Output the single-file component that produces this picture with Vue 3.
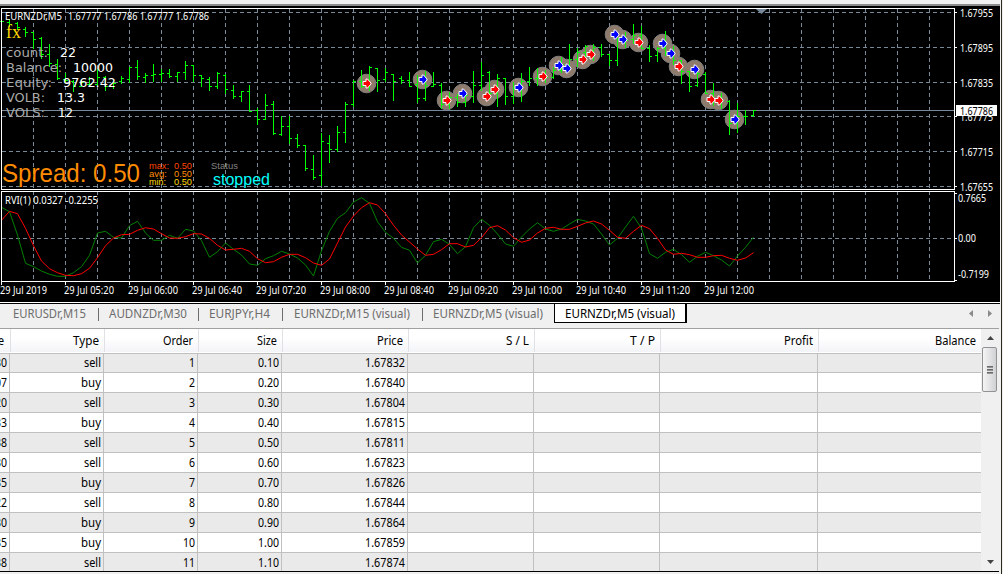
<template>
  <div class="terminal">
    <div class="chart-area">
      <svg class="chart" width="1000" height="296" viewBox="0 6 1000 296">
        <rect x="0" y="6" width="1000" height="296" fill="#000" />

        <!-- grid -->
        <g class="grid">
          <line v-for="x in gridX" :key="'v' + x" :x1="x + 0.5" :x2="x + 0.5" y1="9" y2="281" />
          <line v-for="y in gridY" :key="'h' + y" x1="2" x2="954" :y1="y + 0.5" :y2="y + 0.5" />
        </g>
        <path d="M756 9h11l-5.500 5z" fill="#778899" />
        <rect x="2" y="110" width="952" height="1" fill="#778899" />

        <!-- trade markers -->
        <g v-for="(m, i) in markers" :key="'m' + i" :transform="`translate(${m[0]} ${m[1]})`">
          <circle cx="0.5" cy="0.500" r="9.300" fill="#8f7b6c" stroke="#82807f" />
        </g>
        <path :d="barPath" class="bars" />
        <g v-for="(m, i) in markers" :key="'a' + i" :transform="`translate(${m[0] + 0.5} ${m[1]})`">
          <path
            d="M-3.500 -1.500h3v-2.500h1.500l3.500 4v1l-3.500 4h-1.500v-2.500h-3z"
            :fill="m[2] === 'b' ? '#0000ff' : '#ff0000'"
            stroke="#fff"
          />
        </g>

        <!-- RVI indicator -->
        <polyline :points="linePoints(rviMain)" class="rvi" stroke="#008000" />
        <polyline :points="linePoints(rviSignal)" class="rvi" stroke="#ff0000" />

        <!-- frames -->
        <rect x="0" y="190" width="956" height="1" fill="#000" />
        <g class="frame">
          <rect x="1.500" y="8.500" width="953" height="181" />
          <rect x="1.500" y="191.500" width="953" height="90" />
          <path v-for="y in gridY" :key="'t' + y" :d="`M955 ${y + 0.5}h2`" />
          <path v-for="(t, i) in times" :key="'n' + i" :d="`M${1.5 + i * 64} 282v3`" />
          <path d="M955 193.500h2M955 280.500h2" />
        </g>

        <!-- scales -->
        <g class="scale">
          <text
            v-for="p in prices"
            :key="p[0]"
            x="960"
            :y="p[1]"
            textLength="33"
            lengthAdjust="spacingAndGlyphs"
          >{{ p[0] }}</text>
          <rect x="956" y="105" width="41" height="11" fill="#fff" />
          <text x="960" y="114.500" class="current" textLength="33" lengthAdjust="spacingAndGlyphs">1.67786</text>
          <text x="958" y="202" textLength="28" lengthAdjust="spacingAndGlyphs">0.7665</text>
          <text x="958" y="242" textLength="18" lengthAdjust="spacingAndGlyphs">0.00</text>
          <text x="958" y="278" textLength="31" lengthAdjust="spacingAndGlyphs">-0.7199</text>
          <text
            v-for="(t, i) in times"
            :key="t"
            :x="i * 64"
            y="294"
            :textLength="i ? 50 : 47"
            lengthAdjust="spacingAndGlyphs"
          >{{ t }}</text>
          <text x="5" y="20" textLength="57" lengthAdjust="spacingAndGlyphs">EURNZDr,M5</text>
          <text x="68" y="20" textLength="141" lengthAdjust="spacingAndGlyphs">1.67777 1.67786 1.67777 1.67786</text>
          <text x="5" y="204" textLength="93" lengthAdjust="spacingAndGlyphs">RVI(1) 0.0327 -0.2255</text>
        </g>

        <!-- advisor panel -->
        <text x="6" y="38" class="fx" textLength="15" lengthAdjust="spacingAndGlyphs">fx</text>
        <g v-for="s in stats" :key="s.label" class="stat">
          <text x="6" :y="s.y" fill="#a9a9a9" :textLength="s.lw" lengthAdjust="spacingAndGlyphs">{{ s.label }}</text>
          <text :x="s.x" :y="s.y" fill="#fff" :textLength="s.vw" lengthAdjust="spacingAndGlyphs">{{ s.value }}</text>
        </g>
        <text x="2" y="182" class="spread" textLength="138" lengthAdjust="spacingAndGlyphs">Spread: 0.50</text>
        <g v-for="s in spreads" :key="s.label" class="small" :fill="s.color">
          <text x="149" :y="s.y" :textLength="s.w" lengthAdjust="spacingAndGlyphs">{{ s.label }}</text>
          <text x="174" :y="s.y" textLength="18" lengthAdjust="spacingAndGlyphs">0.50</text>
        </g>
        <text x="211" y="169" class="small" fill="#808080" textLength="27" lengthAdjust="spacingAndGlyphs">Status</text>
        <text x="213" y="185" class="status" textLength="57" lengthAdjust="spacingAndGlyphs">stopped</text>
      </svg>
    </div>

    <div class="tabs">
      <div
        v-for="t in tabs"
        :key="t.id"
        class="tab"
        :class="{ active: t.active }"
        :style="{ width: t.width + 'px' }"
      >
        <svg :width="t.text" height="16">
          <text x="0" y="12" :textLength="t.text" lengthAdjust="spacingAndGlyphs">{{ t.name }}</text>
        </svg>
      </div>
      <svg class="arrows" width="26" height="9" viewBox="0 0 26 9" fill="#8a8a8a">
        <path d="M4 1v7L0 4.500z" />
        <path d="M19 1v7l4-3.500z" />
      </svg>
    </div>

    <div class="results">
      <div class="table">
        <div class="row head">
          <div v-for="(c, i) in columns" :key="i" class="cell" :style="{ width: c.hw + 'px' }">
            <svg :width="c.tw" height="16">
              <text :x="i ? 0 : -20" y="12" :textLength="i ? c.tw : 25" lengthAdjust="spacingAndGlyphs">{{ c.name }}</text>
            </svg>
          </div>
        </div>
        <div v-for="(r, n) in rows" :key="n" class="row" :class="{ odd: n % 2 === 0 }">
          <div v-for="(c, i) in columns" :key="i" class="cell" :style="{ width: c.w + 'px' }">
            <svg v-if="r[i]" :width="cellWidth(i, r[i])" height="16">
              <text x="0" y="12" :textLength="cellWidth(i, r[i])" lengthAdjust="spacingAndGlyphs">{{ r[i] }}</text>
            </svg>
          </div>
        </div>
      </div>
      <div class="scrollbar">
        <svg width="17" height="18" viewBox="0 0 17 18"><path d="M5 11l3.500-4 3.500 4z" fill="#444" /></svg>
        <div class="thumb"><i></i><i></i><i></i></div>
        <svg class="down" width="17" height="18" viewBox="0 0 17 18"><path d="M5 7l3.500 4 3.500-4z" fill="#444" /></svg>
      </div>
    </div>
  </div>
</template>

<script setup>
const gridX = Array.from({ length: 29 }, (_, i) => 33 + i * 32)
const gridY = [12, 47, 82, 116, 151, 186, 238]

const prices = [
  ['1.67955', 17],
  ['1.67895', 52],
  ['1.67835', 87],
  ['1.67775', 121],
  ['1.67715', 156],
  ['1.67655', 190.5]
]

const times = [
  '29 Jul 2019', '29 Jul 05:20', '29 Jul 06:00', '29 Jul 06:40', '29 Jul 07:20', '29 Jul 08:00',
  '29 Jul 08:40', '29 Jul 09:20', '29 Jul 10:00', '29 Jul 10:40', '29 Jul 11:20', '29 Jul 12:00'
]

// high, low, open, close for each bar, 8px apart
const bars = [
  [20, 22, 21, 21], [19, 26, 22, 24], [22, 29, 23, 27], [27, 36, 29, 32], [32, 48, 32, 39], [37, 58, 38, 54],
  [44, 66, 54, 63], [59, 79, 64, 78], [73, 82, 79, 80], [80, 91, 81, 86], [80, 86, 86, 82], [77, 86, 84, 84],
  [69, 85, 84, 77], [76, 90, 77, 86], [79, 88, 86, 83], [76, 83, 81, 78], [67, 82, 79, 67], [60, 79, 67, 76],
  [73, 82, 77, 75], [64, 81, 75, 74], [69, 81, 74, 73], [69, 77, 73, 76], [72, 81, 76, 72], [61, 79, 72, 65],
  [65, 81, 65, 75], [75, 86, 75, 78], [77, 90, 79, 86], [72, 88, 86, 73], [74, 93, 75, 89], [85, 98, 90, 96],
  [91, 101, 96, 91], [85, 111, 91, 111], [108, 124, 110, 119], [94, 119, 119, 105], [101, 134, 104, 133],
  [116, 135, 134, 126], [116, 143, 126, 138], [134, 147, 138, 145], [145, 170, 145, 168], [155, 179, 169, 177],
  [133, 185, 175, 141], [135, 162, 143, 149], [126, 151, 149, 132], [102, 142, 132, 104], [80, 106, 104, 81],
  [70, 87, 81, 86], [66, 90, 86, 67], [68, 91, 68, 80], [68, 81, 79, 72], [74, 100, 74, 81], [76, 83, 78, 80],
  [72, 86, 80, 86], [75, 102, 84, 98], [71, 100, 98, 85], [72, 86, 86, 84], [83, 108, 85, 104], [92, 108, 104, 97],
  [94, 106, 97, 102], [94, 106, 102, 95], [71, 102, 96, 85], [62, 90, 85, 75], [71, 98, 72, 93], [74, 106, 93, 78],
  [78, 104, 78, 96], [82, 103, 96, 88], [73, 101, 88, 81], [67, 85, 81, 78], [68, 85, 78, 78], [70, 82, 78, 77],
  [67, 78, 77, 70], [57, 72, 70, 64], [44, 68, 67, 59], [48, 66, 59, 52], [45, 56, 52, 46], [44, 60, 50, 47],
  [44, 56, 47, 54], [54, 65, 54, 60], [38, 65, 60, 38], [32, 47, 38, 40], [24, 43, 39, 35], [26, 48, 35, 48],
  [45, 61, 48, 56], [47, 61, 55, 48], [31, 55, 48, 52], [46, 64, 52, 60], [60, 83, 60, 71], [71, 91, 71, 86],
  [68, 86, 85, 73], [72, 93, 74, 93], [83, 105, 93, 98], [93, 108, 96, 100], [100, 134, 101, 123],
  [103, 132, 123, 116], [110, 124, 116, 116], [110, 116, 115, 110]
]

const barPath = bars
  .map(([h, l, o, c], i) => {
    const x = 1.5 + i * 8
    return `M${x} ${h}V${l + 1}M${x - 2.5} ${o + 0.5}h2M${x} ${c + 0.5}h2.5`
  })
  .join('')

const markers = [
  [366, 83, 'r'], [422, 79, 'b'], [446, 100, 'r'], [462, 93, 'b'], [486, 96, 'r'], [494, 89, 'r'],
  [518, 87, 'b'], [542, 76, 'r'], [558, 65, 'b'], [566, 68, 'b'], [582, 59, 'r'], [590, 54, 'r'],
  [614, 34, 'b'], [622, 39, 'b'], [638, 42, 'r'], [662, 43, 'b'], [670, 53, 'b'], [678, 66, 'r'],
  [694, 69, 'b'], [710, 99, 'r'], [718, 100, 'r'], [734, 119, 'b']
]

// indicator values in thirds of a pixel below the top of the pane
const rviMain = [
  67, 80, 150, 235, 245, 258, 268, 274, 274, 263, 245, 211, 144, 139, 157, 159, 122, 109, 144, 166, 166, 151,
  160, 133, 138, 167, 217, 200, 174, 193, 210, 237, 241, 221, 212, 199, 207, 219, 240, 273, 197, 139, 100, 83,
  51, 38, 55, 110, 142, 160, 187, 196, 234, 211, 170, 163, 178, 206, 185, 128, 103, 121, 147, 177, 184, 156,
  132, 113, 132, 139, 132, 117, 103, 108, 117, 147, 180, 160, 126, 94, 130, 206, 220, 202, 193, 209, 232, 214,
  202, 212, 225, 243, 213, 187, 157
]
const rviSignal = [
  106, 79, 86, 130, 182, 228, 251, 263, 271, 272, 266, 250, 218, 182, 159, 149, 148, 136, 128, 132, 146, 159,
  160, 155, 146, 147, 160, 181, 195, 193, 190, 199, 221, 233, 230, 217, 208, 208, 218, 234, 241, 222, 174, 126,
  93, 68, 53, 60, 86, 121, 150, 171, 192, 211, 208, 194, 176, 176, 186, 181, 158, 128, 122, 135, 158, 172,
  165, 144, 130, 127, 133, 133, 124, 114, 108, 117, 136, 157, 160, 139, 121, 131, 160, 195, 208, 205, 209, 217,
  217, 212, 211, 220, 226, 219, 203
]

const linePoints = (values) => values.map((v, i) => `${1.5 + i * 8},${(185 + v / 3).toFixed(1)}`).join(' ')

const stats = [
  { label: 'count:', lw: 42, value: '22', x: 60, vw: 16, y: 57 },
  { label: 'Balance:', lw: 56, value: '10000', x: 73, vw: 40, y: 72 },
  { label: 'Equity:', lw: 46, value: '9762.42', x: 63, vw: 53, y: 87 },
  { label: 'VOLB:', lw: 39, value: '13.3', x: 57, vw: 28, y: 102 },
  { label: 'VOLS:', lw: 39, value: '12', x: 58, vw: 15, y: 117 }
]

const spreads = [
  { label: 'max:', w: 20, y: 169, color: '#ff4500' },
  { label: 'avg:', w: 18, y: 177, color: '#ff8c00' },
  { label: 'min:', w: 17, y: 185, color: '#ffd700' }
]

const tabs = [
  { id: 1, name: 'EURUSDr,M15', width: 99, text: 73 },
  { id: 2, name: 'AUDNZDr,M30', width: 100, text: 78 },
  { id: 3, name: 'EURJPYr,H4', width: 84, text: 61 },
  { id: 4, name: 'EURNZDr,M15 (visual)', width: 140, text: 116 },
  { id: 5, name: 'EURNZDr,M5 (visual)', width: 132, text: 110 },
  { id: 6, name: 'EURNZDr,M5 (visual)', width: 133, text: 110, active: true }
]

const columns = [
  { name: 'Time', w: 10, hw: 11, tw: 6 },
  { name: 'Type', w: 94, hw: 94, tw: 26 },
  { name: 'Order', w: 94, hw: 94, tw: 30 },
  { name: 'Size', w: 84, hw: 84, tw: 20 },
  { name: 'Price', w: 126, hw: 126, tw: 26 },
  { name: 'S / L', w: 126, hw: 126, tw: 23 },
  { name: 'T / P', w: 126, hw: 126, tw: 25 },
  { name: 'Profit', w: 158, hw: 158, tw: 29 },
  { name: 'Balance', w: 163, hw: 162, tw: 41 }
]

const rows = [
  ['30', 'sell', '1', '0.10', '1.67832'],
  ['07', 'buy', '2', '0.20', '1.67840'],
  ['20', 'sell', '3', '0.30', '1.67804'],
  ['33', 'buy', '4', '0.40', '1.67815'],
  ['38', 'sell', '5', '0.50', '1.67811'],
  ['30', 'sell', '6', '0.60', '1.67823'],
  ['35', 'buy', '7', '0.70', '1.67826'],
  ['22', 'sell', '8', '0.80', '1.67844'],
  ['30', 'buy', '9', '0.90', '1.67864'],
  ['35', 'buy', '10', '1.00', '1.67859'],
  ['38', 'sell', '11', '1.10', '1.67874']
]

const cellWidth = (col, value) => {
  if (col === 1) return value === 'buy' ? 20 : 17
  if (col === 3) return 21
  if (col === 4) return 40
  return value.length * 6
}
</script>

<style>
body {
  overflow: hidden;
  background: #f0f0f0;
}
</style>

<style scoped>
.terminal {
  width: 1003px;
  height: 574px;
  box-sizing: border-box;
  padding-top: 4px;
  display: flex;
  flex-direction: column;
  background: linear-gradient(90deg, #f0f0f0 1001px, #2b2a1a 1001px, #2b2a1a 1002px, #f0f0f0 1002px);
  font-family: 'Noto Sans', 'Open Sans', sans-serif;
  font-size: 12px;
  overflow: hidden;
}

svg {
  display: block;
  flex: none;
  overflow: visible;
}

.chart-area {
  width: 1000px;
  height: 300px;
  box-sizing: border-box;
  border-top: 2px solid #8c8c8c;
  border-bottom: 1px solid #000;
  background: #fff;
}

.chart {
  overflow: hidden;
}

.grid line {
  stroke: #778899;
  stroke-dasharray: 4 3;
}

.bars {
  fill: none;
  stroke: #00ff00;
  shape-rendering: crispEdges;
}

.rvi {
  fill: none;
  stroke-width: 1;
}

.frame rect,
.frame path {
  fill: none;
  stroke: #fff;
}

.scale text {
  font-size: 10px;
  fill: #fff;
}

.scale .current {
  fill: #000;
}

.fx {
  font: 18px 'Liberation Serif', serif;
  fill: #ffd700;
}

.stat text {
  font: 13px 'DejaVu Sans', sans-serif;
}

.spread {
  font: 25px 'Liberation Sans', sans-serif;
  fill: #ff8c00;
}

.small text,
text.small {
  font: 9px 'Liberation Sans', sans-serif;
}

.status {
  font: 16px 'Liberation Sans', sans-serif;
  fill: #00ffff;
}

.tabs {
  height: 24px;
  display: flex;
  align-items: flex-start;
  background: #f0f0f0;
  width: 1001px;
}

.tab {
  position: relative;
  height: 19px;
  box-sizing: border-box;
  display: flex;
  justify-content: flex-end;
  padding: 2px 13px 0 0;
  flex: none;
}

.tab text {
  fill: #6d6d6d;
}

.tab:not(.active)::after {
  content: '';
  position: absolute;
  right: 0;
  top: 4px;
  width: 1px;
  height: 13px;
  background: #6d6d6d;
}

.tab:nth-child(2),
.tab:nth-child(5) {
  padding-right: 12px;
}

.tab:nth-child(5)::after {
  display: none;
}

.tab.active {
  margin-left: -1px;
  margin-right: auto;
  border: 1px solid #000;
  border-width: 0 2px 1px 1px;
  background: #fff;
  padding-right: 10px;
}

.tab.active text {
  fill: #000;
}

.arrows {
  margin: 5px 6px 0 0;
}

.results {
  width: 999px;
  height: 244px;
  box-sizing: border-box;
  display: flex;
  border-top: 1px solid #a0a0a0;
  border-bottom: 1px solid #000;
  overflow: hidden;
}

.table {
  width: 981px;
  overflow: hidden;
  background: #fff;
}

.row {
  display: flex;
  height: 20px;
  box-sizing: border-box;
  border-bottom: 1px solid #c0c0c0;
}

.row.odd {
  background: #eaeaea;
}

.row.head {
  height: 25px;
  background: linear-gradient(#fff 9px, #f3f4f7 23px, #fff 23px);
}

.row.head + .row {
  height: 19px;
}

.cell {
  flex: none;
  box-sizing: border-box;
  display: flex;
  justify-content: flex-end;
  align-items: center;
  padding-right: 2px;
  border-right: 1px solid #c0c0c0;
  overflow: hidden;
}

.cell:last-child {
  border-right: none;
}

.head .cell {
  height: 23px;
  padding-right: 5px;
  border-right-color: #dfe1e5;
}

.scrollbar {
  width: 17px;
  padding-left: 1px;
  display: flex;
  flex-direction: column;
  background: #f0f0f0;
}

.thumb {
  width: 15px;
  height: 45px;
  box-sizing: border-box;
  border: 1px solid #929292;
  border-radius: 2px;
  background: linear-gradient(90deg, #f5f5f5, #d0d1d4);
  display: flex;
  flex-direction: column;
  align-items: center;
  justify-content: center;
  gap: 1px;
}

.thumb i {
  width: 6px;
  height: 2px;
  background: linear-gradient(#555, #aaa);
}

.down {
  margin-top: auto;
}
</style>
